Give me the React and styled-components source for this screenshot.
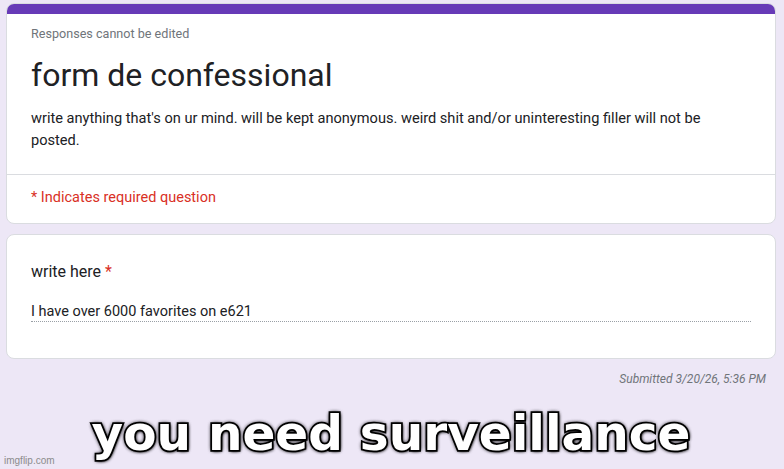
import React from "react"
import styled, { createGlobalStyle } from "styled-components"

const GlobalStyle = createGlobalStyle`
  html, body {
    margin: 0;
    padding: 0;
    background: #ede7f6;
  }
  body {
    font-family: Roboto, "Liberation Sans", Arial, sans-serif;
    color: #202124;
  }
`

const Page = styled.div`
  position: relative;
  width: 784px;
  height: 469px;
  box-sizing: border-box;
  padding: 3px 8px 0 6px;
  overflow: hidden;
  background: #ede7f6;
`

const Card = styled.div`
  background: #fff;
  border: 1px solid #dadce0;
  border-radius: 8px;
  overflow: hidden;
  margin-bottom: ${(p) => p.gap || 0}px;
`

const TopBar = styled.div`
  height: 10px;
  background: #673ab7;
`

const Header = styled.div`
  padding: 12px 24px 23px 24px;
`

const Notice = styled.div`
  font-size: 12.6px;
  line-height: 16px;
  color: #70757a;
`

const Title = styled.h1`
  margin: 13px 0 0 0;
  font-size: 32px;
  line-height: 40px;
  font-weight: 400;
  color: #202124;
`

const Description = styled.p`
  margin: 12px 0 0 0;
  max-width: 700px;
  font-size: 14.6px;
  line-height: 22px;
  color: #202124;
`

const Required = styled.div`
  border-top: 1px solid #dadce0;
  padding: 13px 24px 15px 24px;
  font-size: 14.5px;
  line-height: 20px;
  color: #d93025;
`

const Question = styled.div`
  padding: 25px 24px 36px 24px;
`

const QuestionTitle = styled.div`
  font-size: 16px;
  line-height: 24px;
  color: #202124;
`

const Star = styled.span`
  color: #d93025;
`

const Answer = styled.div`
  margin-top: 19px;
  font-size: 14.5px;
  line-height: 18px;
  color: #202124;
  border-bottom: 1px dotted #9aa0a6;
`

const Submitted = styled.div`
  margin-top: 12px;
  padding-right: 10px;
  text-align: right;
  font-size: 12px;
  line-height: 16px;
  font-style: italic;
  color: #70757a;
`

const Caption = styled.div`
  margin-top: 18px;
  text-align: center;
  font-family: "DejaVu Sans", sans-serif;
  font-weight: 700;
  font-size: 48.5px;
  line-height: 56px;
  color: #fff;
  -webkit-text-stroke: 3.5px #000;
  paint-order: stroke fill;
  text-shadow: 0 0 4px #000, 0 0 4px #000, 1px 1px 3px #000;
`

const Watermark = styled.div`
  position: absolute;
  left: 4px;
  bottom: 3px;
  font-family: "Liberation Sans", Arial, sans-serif;
  font-size: 10px;
  color: #8c8c8c;
`

export default function App() {
  return (
    <>
      <GlobalStyle />
      <Page>
        <Card gap={10}>
          <TopBar />
          <Header>
            <Notice>Responses cannot be edited</Notice>
            <Title>form de confessional</Title>
            <Description>
              write anything that's on ur mind. will be kept anonymous. weird shit
              and/or uninteresting filler will not be posted.
            </Description>
          </Header>
          <Required>* Indicates required question</Required>
        </Card>
        <Card>
          <Question>
            <QuestionTitle>
              write here <Star>*</Star>
            </QuestionTitle>
            <Answer>I have over 6000 favorites on e621</Answer>
          </Question>
        </Card>
        <Submitted>Submitted 3/20/26, 5:36 PM</Submitted>
        <Caption>you need surveillance</Caption>
        <Watermark>imgflip.com</Watermark>
      </Page>
    </>
  )
}
